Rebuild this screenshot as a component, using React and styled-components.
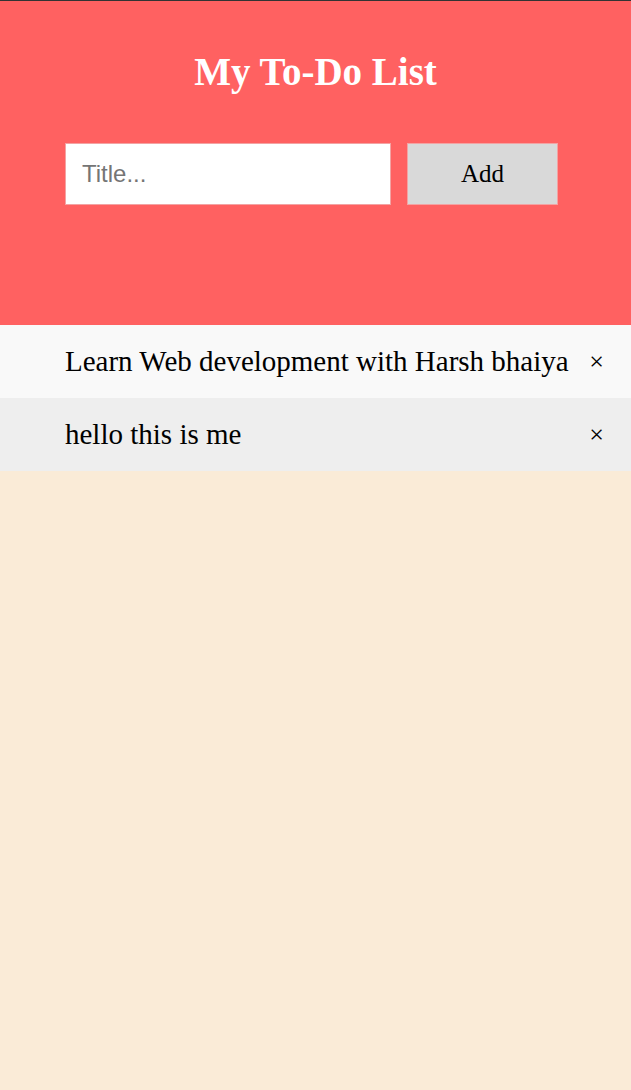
import React from "react";
import styled, { createGlobalStyle } from "styled-components";

const Global = createGlobalStyle`
  html, body { margin: 0; padding: 0; background: #faebd7; }
  body { font-family: "Liberation Serif", "Times New Roman", serif; border-top: 1px solid #333; min-height: 1089px; }
  * { box-sizing: border-box; }
`;

const Header = styled.header`
  background: #ff6161;
  height: 324px;
  padding-top: 45px;
  display: flex;
  flex-direction: column;
  align-items: center;
`;

const Title = styled.h2`
  margin: 0;
  color: #fff;
  font-size: 39px;
  font-weight: bold;
  line-height: 52px;
`;

const Form = styled.div`
  display: flex;
  align-self: stretch;
  padding-left: 65px;
  margin-top: 45px;
  gap: 16px;
`;

const Input = styled.input`
  width: 326px;
  height: 62px;
  border: 1px solid #f3a3a3;
  padding: 0 16px;
  font-family: "Liberation Sans", Arial, sans-serif;
  font-size: 24px;
  outline: none;
  &::placeholder { color: #757575; }
`;

const AddButton = styled.button`
  width: 151px;
  height: 62px;
  background: #d9d9d9;
  border: 1px solid #f3a3a3;
  font-family: "Liberation Serif", "Times New Roman", serif;
  font-size: 25px;
  color: #000;
  cursor: pointer;
`;

const List = styled.ul`
  margin: 0;
  padding: 0;
  list-style: none;
`;

const Item = styled.li`
  display: flex;
  align-items: center;
  height: 73px;
  padding-left: 65px;
  background: ${(p) => (p.$odd ? "#eeeeee" : "#f9f9f9")};
  font-size: 29px;
  color: #000;
`;

const ItemText = styled.span`
  flex: 1;
  min-width: 0;
  white-space: nowrap;
`;

const Close = styled.span`
  flex: none;
  width: 54px;
  padding-right: 27px;
  text-align: right;
  font-family: "Liberation Serif", "Times New Roman", serif;
  font-size: 26px;
  cursor: pointer;
`;

const todos = ["Learn Web development with Harsh bhaiya", "hello this is me"];

export default function App() {
  return (
    <>
      <Global />
      <Header>
        <Title>My To-Do List</Title>
        <Form>
          <Input placeholder="Title..." />
          <AddButton>Add</AddButton>
        </Form>
      </Header>
      <List>
        {todos.map((t, i) => (
          <Item key={i} $odd={i % 2 === 1}>
            <ItemText>{t}</ItemText>
            <Close>×</Close>
          </Item>
        ))}
      </List>
    </>
  );
}
